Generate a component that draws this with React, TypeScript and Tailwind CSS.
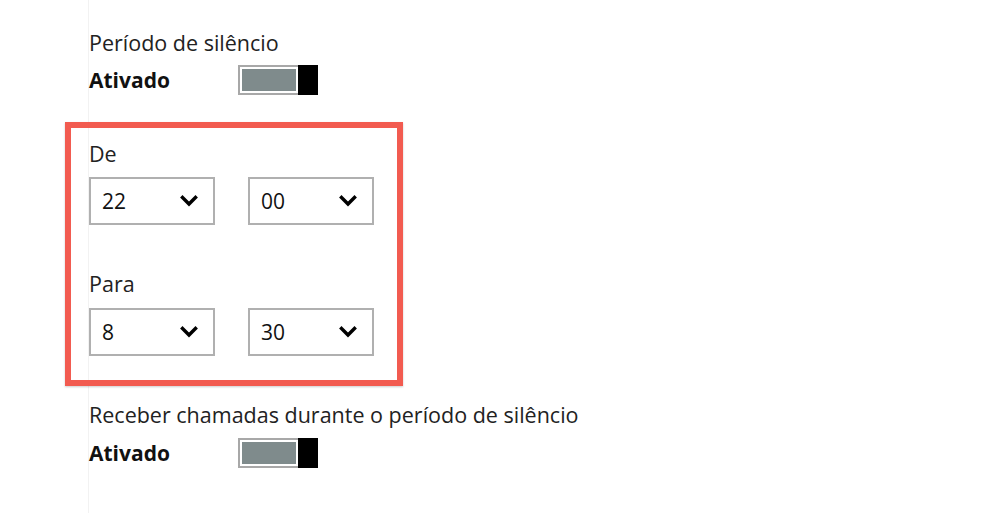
import * as React from 'react';

const Chevron = () => (
  <svg width="18" height="12" viewBox="0 0 18 12" fill="none">
    <path d="M2.5 2.5 L9 9 L15.5 2.5" stroke="#000" strokeWidth="3.4" strokeLinecap="square" strokeLinejoin="miter" />
  </svg>
);

const Toggle = () => (
  <div className="flex w-[80px] h-[30px]">
    <div className="flex-1 border-2 border-r-0 border-[#a8a8a8] p-[2px]">
      <div className="h-full bg-[#7f8b8c]" />
    </div>
    <div className="w-[20px] bg-black" />
  </div>
);

const TimeSelect = ({ value }: { value: string }) => (
  <div className="flex items-center justify-between w-[126px] h-[48px] border-2 border-[#b0b0b0] pl-[11px] pr-[15px] bg-white">
    <span className="text-[21px] leading-[24px] text-[#111]">{value}</span>
    <Chevron />
  </div>
);

const ToggleRow = () => (
  <div className="flex items-center h-[30px]">
    <span className="w-[149px] text-[21px] leading-[24px] font-bold text-[#111]">Ativado</span>
    <Toggle />
  </div>
);

export default function App() {
  return (
    <div
      className="w-[984px] h-[513px] bg-white overflow-hidden"
      style={{ fontFamily: '"Open Sans", "Noto Sans", sans-serif' }}
    >
      <div className="ml-[88px] h-full border-l border-[#f2f2f2] pt-[31px] flex flex-col items-start">
        <p className="text-[21.5px] leading-[24px] text-[#222]">Período de silêncio</p>
        <div className="mt-[10px]">
          <ToggleRow />
        </div>

        <div className="mt-[27px] -ml-[24px] w-[338px] h-[264px] border-[6px] border-[#f25b50] shadow-[0_1px_2px_rgba(0,0,0,0.2)] pl-[18px] pt-[14px]">
          <p className="text-[21.5px] leading-[24px] text-[#222]">De</p>
          <div className="mt-[11px] flex gap-[33px]">
            <TimeSelect value="22" />
            <TimeSelect value="00" />
          </div>
          <p className="mt-[47px] text-[21.5px] leading-[24px] text-[#222]">Para</p>
          <div className="mt-[12px] flex gap-[33px]">
            <TimeSelect value="8" />
            <TimeSelect value="30" />
          </div>
        </div>

        <p className="mt-[17px] text-[21.5px] leading-[24px] text-[#222]">Receber chamadas durante o período de silêncio</p>
        <div className="mt-[11px]">
          <ToggleRow />
        </div>
      </div>
    </div>
  );
}
